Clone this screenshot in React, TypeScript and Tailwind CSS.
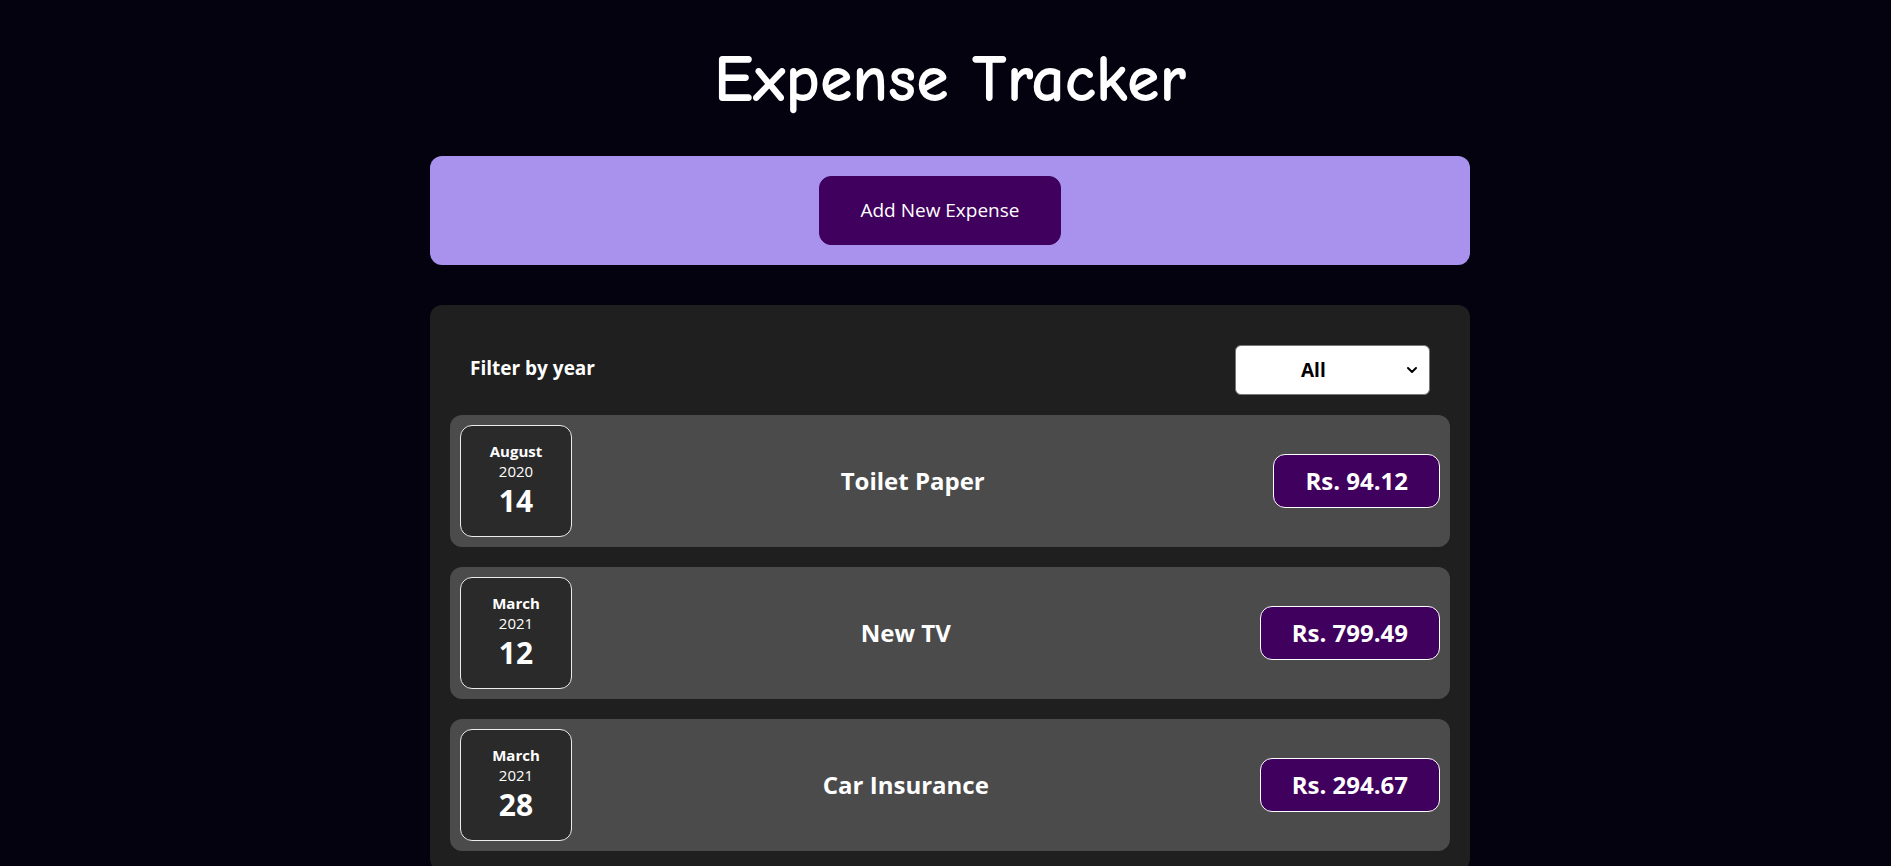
import { ChevronDown } from "lucide-react";

const expenses = [
  { id: "e1", title: "Toilet Paper", amount: "94.12", month: "August", year: "2020", day: "14" },
  { id: "e2", title: "New TV", amount: "799.49", month: "March", year: "2021", day: "12" },
  { id: "e3", title: "Car Insurance", amount: "294.67", month: "March", year: "2021", day: "28" },
];

function ExpenseDate({ month, year, day }: { month: string; year: string; day: string }) {
  return (
    <div className="flex h-[112px] w-[112px] shrink-0 flex-col items-center justify-center rounded-xl border border-[#ececec] bg-[#2a2a2a] text-white">
      <div className="text-[15px] font-bold leading-[20px]">{month}</div>
      <div className="text-[15px] leading-[20px]">{year}</div>
      <div className="text-[30px] font-bold leading-[40px]">{day}</div>
    </div>
  );
}

function ExpenseItem({ e }: { e: (typeof expenses)[number] }) {
  return (
    <div className="flex items-center rounded-xl bg-[#4b4b4b] p-[10px]">
      <ExpenseDate month={e.month} year={e.year} day={e.day} />
      <h2 className="mr-5 flex-1 text-center text-[24px] font-bold text-white">{e.title}</h2>
      <div className="rounded-xl border border-white bg-[#40005d] px-[31px] py-[10px] text-[24px] font-bold leading-[32px] text-white">
        Rs. {e.amount}
      </div>
    </div>
  );
}

export default function App() {
  return (
    <div className="min-h-screen bg-[#03020e] pl-[9px] font-['Open_Sans',sans-serif]">
      <h1 className="pt-[40px] text-center font-['Comic_Sans_MS','Comic_Neue',cursive] text-[66px] font-bold leading-[80px] text-white">
        Expense Tracker
      </h1>

      <div className="mx-auto mt-[36px] w-[1040px] rounded-xl bg-[#a892ee] p-5 text-center">
        <button className="mr-5 rounded-xl border border-[#40005d] bg-[#40005d] px-10 py-5 text-[19px] leading-[27px] text-white">
          Add New Expense
        </button>
      </div>

      <div className="mx-auto mt-10 w-[1040px] rounded-xl bg-[#1f1f1f] p-5">
        <div className="my-5 flex items-center justify-between px-5 text-white">
          <label className="pb-1 text-[19px] font-bold">Filter by year</label>
          <div className="flex h-[50px] w-[195px] items-center justify-between rounded-md border border-[#767676] bg-white pl-[65px] pr-[9px] text-black">
            <span className="text-[19px] font-bold">All</span>
            <ChevronDown className="h-4 w-4" strokeWidth={3} />
          </div>
        </div>
        <div className="flex flex-col gap-5">
          {expenses.map((e) => (
            <ExpenseItem key={e.id} e={e} />
          ))}
        </div>
      </div>
    </div>
  );
}
